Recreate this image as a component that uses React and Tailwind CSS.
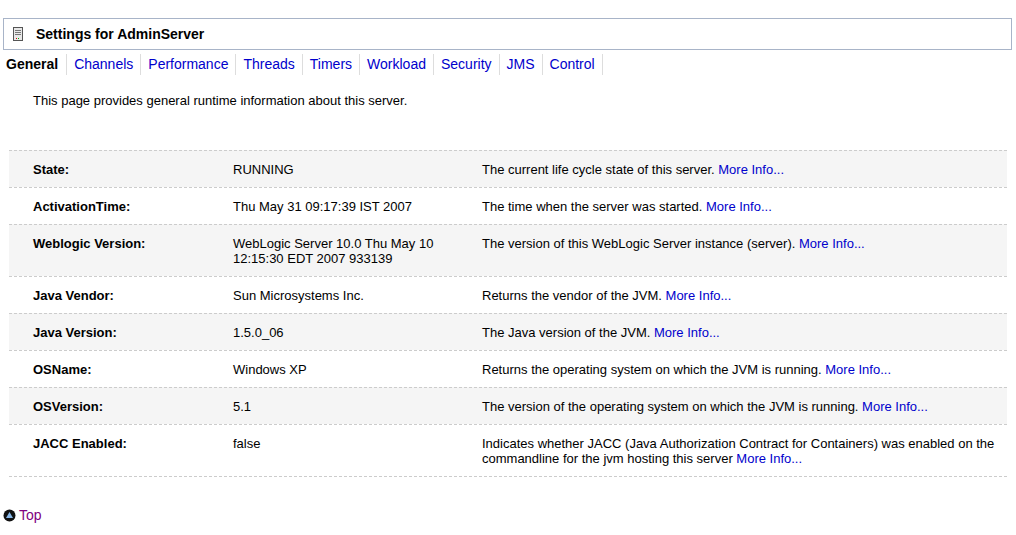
export default function App() {
  const rows = [
    ["State:", "RUNNING", "The current life cycle state of this server."],
    ["ActivationTime:", "Thu May 31 09:17:39 IST 2007", "The time when the server was started."],
    ["Weblogic Version:", "WebLogic Server 10.0 Thu May 10 12:15:30 EDT 2007 933139", "The version of this WebLogic Server instance (server)."],
    ["Java Vendor:", "Sun Microsystems Inc.", "Returns the vendor of the JVM."],
    ["Java Version:", "1.5.0_06", "The Java version of the JVM."],
    ["OSName:", "Windows XP", "Returns the operating system on which the JVM is running."],
    ["OSVersion:", "5.1", "The version of the operating system on which the JVM is running."],
    ["JACC Enabled:", "false", "Indicates whether JACC (Java Authorization Contract for Containers) was enabled on the commandline for the jvm hosting this server"],
  ];
  const tabs = ["Channels", "Performance", "Threads", "Timers", "Workload", "Security", "JMS", "Control"];
  return (
    <div className="w-[1016px] h-[535px] bg-white text-[13px] text-black" style={{ fontFamily: '"Liberation Sans", Arial, sans-serif' }}>
      <div className="pt-[18px] pl-[3px] pr-[4px]">
        <div className="h-[32px] border border-[#a8b4c8] flex items-center">
          <svg width="12" height="16" viewBox="0 0 12 16" className="ml-[8px]">
            <rect x="1.5" y="1.5" width="9" height="13" fill="#e8e8e8" stroke="#555" />
            <rect x="3" y="4" width="6" height="1" fill="#777" />
            <rect x="3" y="6" width="6" height="1" fill="#777" />
            <rect x="3" y="8" width="6" height="1" fill="#777" />
            <rect x="4" y="12" width="1" height="1" fill="#d00" />
            <rect x="6" y="12" width="1" height="1" fill="#0a0" />
          </svg>
          <span className="ml-[12px] text-[14px] font-bold">Settings for AdminServer</span>
        </div>
      </div>
      <div className="flex items-center h-[28px] pl-[6px] text-[14px]">
        <span className="font-bold pr-[8px] border-r border-[#ddd]">General</span>
        {tabs.map((t) => (
          <span key={t} className="px-[7px] border-r border-[#ddd] text-[#0000cc]">{t}</span>
        ))}
      </div>
      <p className="pl-[33px] mt-[15px] leading-[15px]">This page provides general runtime information about this server.</p>
      <div className="ml-[9px] mr-[9px] mt-[42px] border-b border-dashed border-[#ccc]">
        {rows.map(([l, v, d], i) => (
          <div key={l} className={`flex border-t border-dashed border-[#ccc] pt-[11px] pb-[10px] leading-[15px] ${i % 2 === 0 ? "bg-[#f5f5f5]" : "bg-white"}`}>
            <div className="w-[224px] shrink-0 pl-[24px] font-bold">{l}</div>
            <div className="w-[249px] shrink-0 pr-[20px]">{v}</div>
            <div className="flex-1 pr-[10px]">{d} <span className="text-[#0000cc]">More Info...</span></div>
          </div>
        ))}
      </div>
      <div className="flex items-center pl-[3px] mt-[28px] text-[14px]">
        <svg width="13" height="13" viewBox="0 0 13 13">
          <circle cx="6.5" cy="6.5" r="6" fill="#111" />
          <polygon points="6.5,3 10,9 3,9" fill="#8ab8e8" />
        </svg>
        <span className="ml-[3px] text-[#800080]">Top</span>
      </div>
    </div>
  );
}
